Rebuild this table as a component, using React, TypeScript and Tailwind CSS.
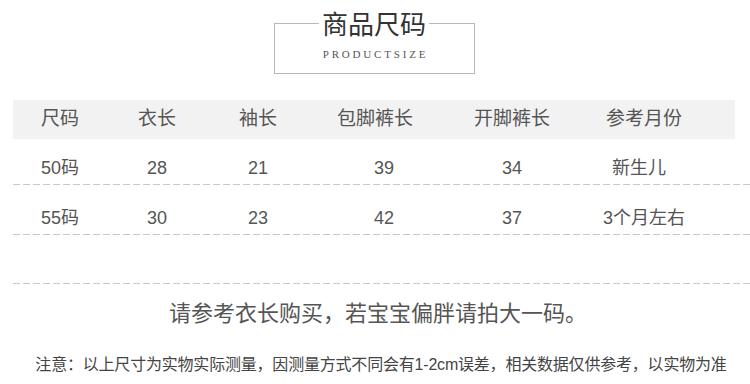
import React from "react";

const font = { fontFamily: '"Liberation Sans", "Noto Sans CJK SC", sans-serif' };

const cols = "grid grid-cols-[94px_100px_102px_132px_142px_122px]";

const header = ["尺码", "衣长", "袖长", "包脚裤长", "开脚裤长", "参考月份"];
const rows = [
  ["50码", "28", "21", "39", "34", "新生儿"],
  ["55码", "30", "23", "42", "37", "3个月左右"],
];

function Dashed() {
  return (
    <div className="ml-[13px] h-px w-[737px] bg-[linear-gradient(to_right,#c8c8c8_70%,transparent_0)] bg-[length:10px_1px]" />
  );
}

export default function App() {
  return (
    <div className="w-[750px] h-[384px] bg-white overflow-hidden text-[#555]" style={font}>
      {/* Title */}
      <div className="ml-[274px] mt-[10px] w-[201px]">
        <div className="flex h-[26px]">
          <div className="w-[45px] h-[13px] mt-[13px] border-l border-t border-[#b8b8b8]" />
          <div className="px-[3px] text-[26px] leading-[26px] text-[#333] whitespace-nowrap translate-y-[2px]">商品尺码</div>
          <div className="flex-1 h-[13px] mt-[13px] border-r border-t border-[#b8b8b8]" />
        </div>
        <div className="h-[38px] border-x border-b border-[#b8b8b8] flex justify-center pt-[13px]">
          <span
            className="text-[11px] leading-[11px] tracking-[2.8px] text-[#555] pl-[2px]"
            style={{ fontFamily: '"Liberation Serif", serif' }}
          >
            PRODUCTSIZE
          </span>
        </div>
      </div>

      {/* Table */}
      <div className="mt-[26px]">
        <div className={`${cols} ml-[13px] w-[722px] h-[39px] bg-[#f2f2f2] items-center text-[19px] text-[#555]`}>
          {header.map((h) => (
            <div key={h} className="text-center">{h}</div>
          ))}
        </div>
        <div className={`${cols} ml-[13px] h-[45px] pt-[14px] items-center text-[18px]`}>
          {rows[0].map((c, i) => (
            <div key={i} className={`text-center ${i === 3 ? "pl-[18px]" : ""} ${i === 5 ? "pr-[10px]" : ""}`}>{c}</div>
          ))}
        </div>
        <Dashed />
        <div className={`${cols} ml-[13px] h-[49px] pt-[18px] items-center text-[18px]`}>
          {rows[1].map((c, i) => (
            <div key={i} className={`text-center ${i === 3 ? "pl-[18px]" : ""}`}>{c}</div>
          ))}
        </div>
        <Dashed />
        <div className="h-[48px]" />
        <Dashed />
      </div>

      <div className="mt-[15px] h-[30px] leading-[30px] text-center text-[22px] text-[#555] pl-[6px]">
        请参考衣长购买，若宝宝偏胖请拍大一码。
      </div>
      <div className="mt-[26px] h-[20px] leading-[20px] text-center text-[16px] tracking-[-0.2px] text-[#444] pl-[12px]">
        注意：以上尺寸为实物实际测量，因测量方式不同会有1-2cm误差，相关数据仅供参考，以实物为准
      </div>
    </div>
  );
}
